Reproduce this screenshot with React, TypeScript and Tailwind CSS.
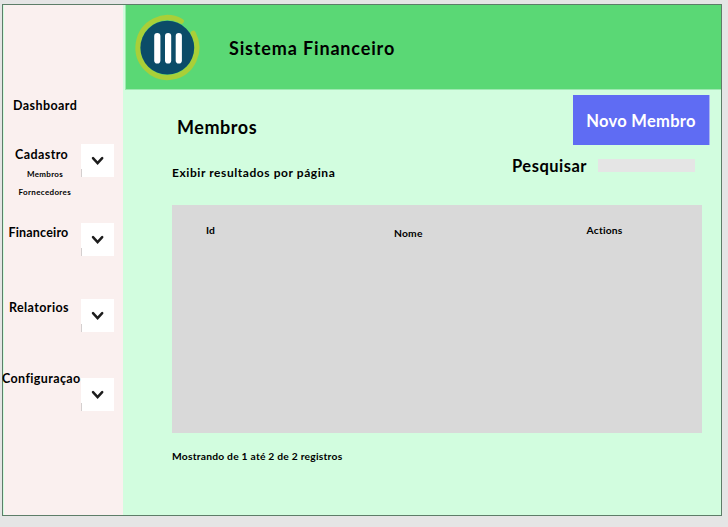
import type { ReactNode } from "react";

function Chevron() {
  return (
    <div className="relative flex h-[33px] w-[33px] shrink-0 items-center justify-center bg-white">
      <svg width="14" height="10" viewBox="0 0 14 10" fill="none">
        <path d="M2 2.2 L6.6 7.2 L11.2 2.2" stroke="#1c1c1c" strokeWidth="2.5" strokeLinecap="round" strokeLinejoin="miter" />
      </svg>
      <span className="absolute bottom-0 left-0 h-2 w-px bg-[#d4cfcf]" />
    </div>
  );
}

function NavItem({ label, labelClass, className, children }: { label: string; labelClass: string; className: string; children?: ReactNode }) {
  return (
    <div className={`flex items-start ${className}`}>
      <div className="w-[77px] shrink-0 whitespace-nowrap">
        <div className={`text-[12.5px] leading-4 ${labelClass}`}>{label}</div>
        {children}
      </div>
      <Chevron />
    </div>
  );
}

function Logo() {
  return (
    <svg width="66" height="68" viewBox="0 0 66 68" fill="none" className="shrink-0 overflow-visible">
      <path d="M47.3 8.2 A29.4 29.9 0 1 0 59.2 20.2" stroke="#a9cf38" strokeWidth="5.2" strokeLinecap="round" />
      <circle cx="33.3" cy="34.7" r="26.9" fill="#0b4c68" />
      <rect x="20.2" y="20" width="6.2" height="30.6" rx="3.1" fill="white" />
      <rect x="31" y="20" width="6.2" height="30.6" rx="3.1" fill="white" />
      <rect x="41.7" y="20" width="6.2" height="30.6" rx="3.1" fill="white" />
    </svg>
  );
}

export default function App() {
  return (
    <div className="h-[527px] w-[728px] overflow-hidden bg-[#e5e5e5] pl-[2px] pt-1 font-['Lato','Noto_Sans',sans-serif] font-bold text-black">
      <div className="flex h-[512px] w-[720px] border border-[#5d7d68] bg-[#d2fddf] pl-px">
        <nav className="w-[119px] shrink-0 bg-[#faf0ef] pt-[93px]">
          <div className="ml-[9px] text-[12.5px] leading-4 tracking-[0.42px]">Dashboard</div>
          <NavItem label="Cadastro" className="mt-[30px] h-[79px]" labelClass="pl-[11px] pt-[3px] tracking-[0.42px]">
            <div className="mt-[3px] pl-[23px] text-[8px] leading-4 tracking-[0.3px]">Membros</div>
            <div className="mt-[2px] pl-[14.5px] text-[8px] leading-4 tracking-[0.35px]">Fornecedores</div>
          </NavItem>
          <NavItem label="Financeiro" className="h-[76px]" labelClass="pl-[4.5px] pt-[2px] tracking-[0.18px]" />
          <NavItem label="Relatorios" className="h-[79px]" labelClass="pl-[5px] pt-px tracking-[0.4px]" />
          <NavItem label="Configuraçao" className="h-[33px]" labelClass="-ml-[2px] -mt-[7px] tracking-[0.38px]" />
        </nav>
        <main className="min-w-0 flex-1">
          <header className="ml-[2px] flex h-[85px] items-center border-b border-l border-b-[#9de9b0] border-l-[#9de9b0] bg-[#5ad875] pl-[8px]">
            <Logo />
            <h1 className="ml-[29px] mt-[2px] text-[18px] leading-6 tracking-[0.85px]">Sistema Financeiro</h1>
          </header>
          <section className="flex h-[115px] justify-between pl-[49px] pr-[11px] pt-[5px]">
            <div className="whitespace-nowrap">
              <h2 className="ml-[5px] mt-[20px] text-[18px] leading-6 tracking-[0.55px]">Membros</h2>
              <p className="mt-[26px] text-[12px] leading-4 tracking-[0.57px]">Exibir resultados por página</p>
            </div>
            <div className="flex flex-col items-end">
              <button className="h-[50px] w-[137px] border-r border-[#a9b6ef] bg-[#5f6cf3] pt-px text-center text-[16.5px] leading-6 tracking-[0.3px] text-white">Novo Membro</button>
              <label className="mr-[15px] mt-[9px] flex items-start whitespace-nowrap text-[16.5px] leading-6 tracking-[0.5px]">
                <span className="w-[86px]">Pesquisar</span>
                <span className="mt-[5px] h-[13px] w-[97px] bg-[#e5e5e5]" />
              </label>
            </div>
          </section>
          <section className="ml-[49px] flex h-[228px] w-[530px] bg-[#d9d9d9] pt-[17px] text-[10.3px] leading-4 tracking-[0.2px]">
            <span className="w-[188px] pl-[34px]">Id</span>
            <span className="w-[192px] pl-[34px] pt-[3px]">Nome</span>
            <span className="pl-[34.5px]">Actions</span>
          </section>
          <p className="ml-[49px] mt-[15px] text-[10.3px] leading-4 tracking-[0.22px]">Mostrando de 1 até 2 de 2 registros</p>
        </main>
      </div>
    </div>
  );
}
